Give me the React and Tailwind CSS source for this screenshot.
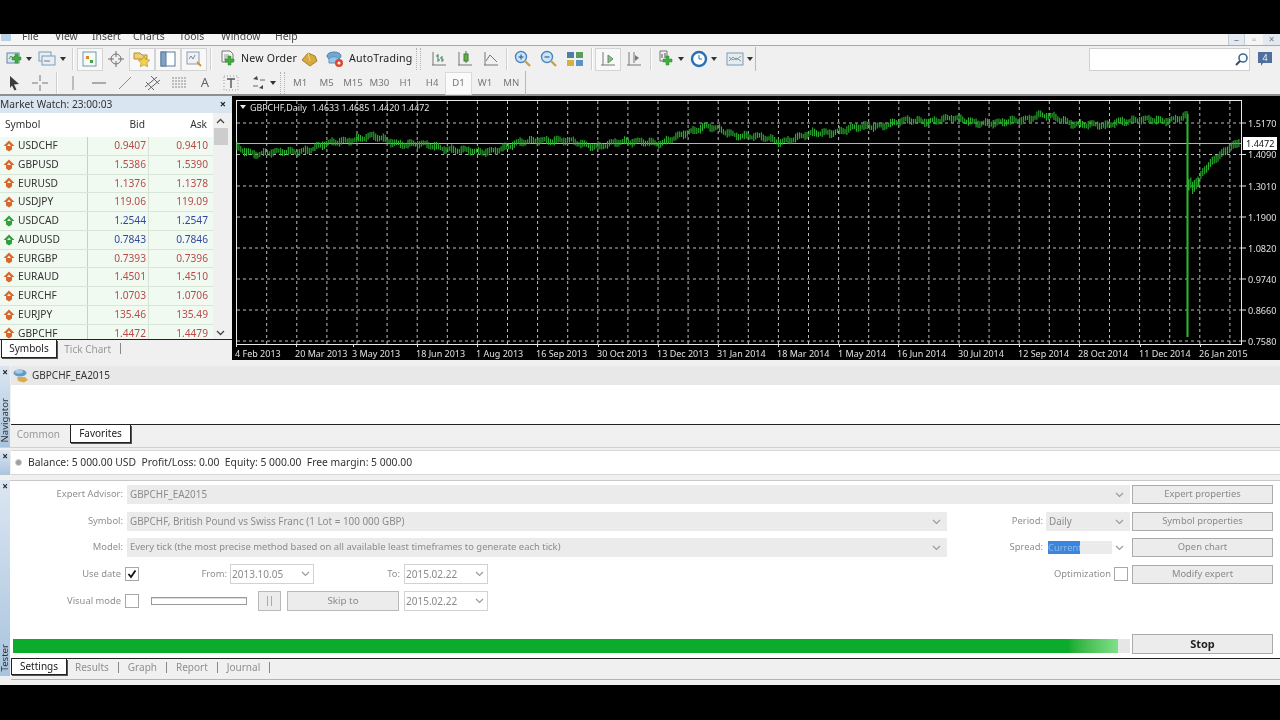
import React from "react";

/* ---------- chart data ---------- */
const KEY = [
  [236, 148], [255, 153], [280, 153], [310, 149], [345, 140], [372, 137], [400, 143], [440, 147], [478, 153],
  [510, 146], [540, 139], [570, 142], [600, 146], [640, 140], [662, 145], [685, 132], [706, 127], [735, 134],
  [780, 141], [820, 133], [860, 128], [900, 122], [950, 119], [1000, 124], [1040, 115], [1070, 122], [1105, 127],
  [1120, 120], [1160, 121], [1186, 116],
];
function baseY(x) {
  for (let i = 0; i < KEY.length - 1; i++) {
    const [a, b] = KEY[i];
    const [c, d] = KEY[i + 1];
    if (x >= a && x <= c) return b + ((d - b) * (x - a)) / (c - a);
  }
  return 116;
}
function bars() {
  let p = "";
  for (let x = 237; x < 1187; x += 1.9) {
    const y = baseY(x) + Math.sin(x * 0.47) * 1.4 + Math.sin(x * 0.13) * 1.3;
    const h = 2 + ((x * 7.3) % 2.4);
    p += `M${x.toFixed(1)} ${(y - h).toFixed(1)}V${(y + h).toFixed(1)}`;
  }
  p += "M1187 114V337M1188 114V337";
  for (let x = 1189; x < 1199; x += 1.8) {
    const t = (x * 5.7) % 6;
    p += `M${x.toFixed(1)} ${(176 + t).toFixed(1)}V${(186 + t * 1.4).toFixed(1)}`;
  }
  for (let x = 1199; x < 1239; x += 1.9) {
    const u = (x - 1199) / 40;
    const y = 182 - 40 * Math.pow(u, 0.62) + Math.sin(x * 0.6);
    p += `M${x.toFixed(1)} ${(y - 4).toFixed(1)}V${(y + 4).toFixed(1)}`;
  }
  return p;
}
const DATES = [
  [235, "4 Feb 2013"], [295, "20 Mar 2013"], [352, "3 May 2013"], [416, "18 Jun 2013"], [476, "1 Aug 2013"],
  [536, "16 Sep 2013"], [597, "30 Oct 2013"], [657, "13 Dec 2013"], [717, "31 Jan 2014"], [777, "18 Mar 2014"],
  [838, "1 May 2014"], [897, "16 Jun 2014"], [958, "30 Jul 2014"], [1018, "12 Sep 2014"], [1078, "28 Oct 2014"],
  [1139, "11 Dec 2014"], [1199, "26 Jan 2015"],
];
const PRICES = [
  [123, "1.5170"], [154.5, "1.4090"], [186, "1.3010"], [217, "1.1900"], [248, "1.0820"], [279, "0.9740"], [310, "0.8660"], [341, "0.7580"],
];
const VX = Array.from({ length: 33 }, (_, i) => 266.7 + i * 30.1);
const HY = [123, 154.5, 186, 217, 248, 279, 310, 341];

function Chart() {
  return (
    <div className="flex-1 h-full bg-black">
      <svg viewBox="232 96 1048 264" className="block w-[1048px] h-[264px]">
        <g stroke="#bdbdbd" strokeDasharray="3 3" strokeWidth="1">
          {VX.map((x) => <line key={x} x1={x} x2={x} y1="101" y2="344" />)}
          {HY.map((y) => <line key={y} x1="237" x2="1241" y1={y} y2={y} />)}
        </g>
        <rect x="236.5" y="100.5" width="1005" height="244" fill="none" stroke="#e8e8e8" />
        <line x1="237" x2="1241" y1="143.5" y2="143.5" stroke="#b4b4b4" />
        <path d={bars()} stroke="#2ab430" strokeWidth="1.1" fill="none" />
        <path d="M240 105h6l-3 4z" fill="#e8e8e8" />
        <text x="250" y="110.5" fill="#e4e4e4" fontSize="8.9" className="whitespace-pre">GBPCHF,Daily  1.4633 1.4685 1.4420 1.4472</text>
        {PRICES.map(([y, t]) => (
          <g key={t}>
            <line x1="1242" x2="1246" y1={y} y2={y} stroke="#e0e0e0" />
            <text x="1248" y={y + 3.5} fill="#e0e0e0" fontSize="9.1">{t}</text>
          </g>
        ))}
        <rect x="1243" y="137" width="34" height="13" fill="#fff" />
        <text x="1246" y="147" fill="#111" fontSize="9.1">1.4472</text>
        {DATES.map(([x, t]) => (
          <g key={t}>
            <line x1={x + 1.5} x2={x + 1.5} y1="344" y2="347" stroke="#e0e0e0" />
            <text x={x} y="356.5" fill="#e0e0e0" fontSize="9">{t}</text>
          </g>
        ))}
      </svg>
    </div>
  );
}

/* ---------- icons ---------- */
const S = ({ children }) => (
  <svg width="18" height="18" viewBox="0 0 18 18" fill="none" className="block">{children}</svg>
);
const Plus = ({ x = 9, y = 9 }) => (
  <path d={`M${x + 3} ${y}h3v3h3v3h-3v3h-3v-3h-3v-3h3z`} fill="#3fae3c" stroke="#2a8a2a" strokeWidth=".5" />
);
const INew = () => <S><rect x="1" y="3" width="12" height="10" fill="#d9e6f2" stroke="#5f86a8" /><path d="M3 9l2-3 2 2 3-3" stroke="#5a9a4a" /><Plus x={6} y={4} /></S>;
const IProf = () => <S><rect x="1" y="2" width="12" height="9" fill="#e7eef6" stroke="#7f9cb8" /><rect x="4" y="6" width="13" height="9" fill="#e7eef6" stroke="#7f9cb8" /><path d="M6 11h6" stroke="#7a7a7a" /></S>;
const IMw = () => <S><rect x="2" y="2" width="13" height="14" fill="#f7fbf7" stroke="#6e97b5" /><path d="M5 6h3v3H5z" fill="#d88b2a" /><path d="M9 10h3v3H9z" fill="#4aa04a" /></S>;
const ICross = () => <S><circle cx="9" cy="9" r="5" stroke="#707070" /><path d="M9 1v6M9 11v6M1 9h6M11 9h6" stroke="#707070" /></S>;
const IStars = () => <S><path d="M1 3h6l2 2h5v4H1z" fill="#efd07a" stroke="#b58f2c" /><path d="M11 6l1.8 3.6 4 .5-2.9 2.7.8 4-3.7-2-3.7 2 .8-4-2.9-2.7 4-.5z" fill="#f4d24e" stroke="#b58f2c" strokeWidth=".7" /></S>;
const IPanel = () => <S><rect x="2" y="2" width="14" height="14" fill="#fff" stroke="#5d7a98" /><rect x="2" y="2" width="5" height="14" fill="#7da3c8" stroke="#5d7a98" /></S>;
const IZoomChart = () => <S><rect x="2" y="2" width="12" height="12" fill="#eef2f6" stroke="#8a9db0" /><path d="M4 9l2-3 2 3 2-4" stroke="#7a8a9a" /><path d="M12 12l4 4" stroke="#c89a3a" strokeWidth="2" /></S>;
const IOrder = () => <S><path d="M3 1h8l3 3v8H3z" fill="#f6f6f6" stroke="#777" /><path d="M5 5h5M5 7h6M5 9h4" stroke="#999" /><Plus x={6} y={6} /></S>;
const IGold = () => <S><path d="M2 10l6-7 7 3 2 5-7 5z" fill="#d8aa3e" stroke="#a87f22" /><path d="M8 3l2 8" stroke="#f0d68a" /></S>;
const IAuto = () => <S><ellipse cx="8" cy="6" rx="7" ry="4" fill="#6ea6d4" stroke="#4d7fa8" /><path d="M3 9c1-3 8-3 10 0v4H3z" fill="#9cc4e2" stroke="#6892b4" /><circle cx="13" cy="13" r="4" fill="#d8492e" /><circle cx="13" cy="13" r="1.5" fill="#fff" /></S>;
const IBar = () => <S><path d="M2 15h14M3 2v13" stroke="#777" /><path d="M8 4v8M6 6h2M8 10h2M12 6v6M10 8h2M12 10h2" stroke="#3e7a5a" /></S>;
const ICandle = () => <S><path d="M2 15h14M3 2v13" stroke="#777" /><path d="M10 1v12" stroke="#3e7a3e" /><rect x="8" y="4" width="4" height="7" fill="#60b13e" stroke="#3e7a3e" /></S>;
const ILine = () => <S><path d="M2 15h14M3 2v13" stroke="#777" /><path d="M4 11l4-6 3 3 4 4" stroke="#6b7f6b" /></S>;
const IZoom = ({ plus }) => <S><circle cx="7" cy="7" r="5.5" fill="#cfe3f5" stroke="#4c86bd" strokeWidth="1.4" /><path d="M4.5 7h5" stroke="#2f70ad" strokeWidth="1.3" />{plus && <path d="M7 4.5v5" stroke="#2f70ad" strokeWidth="1.3" />}<path d="M11 11l5 5" stroke="#c9a24a" strokeWidth="2.4" /></S>;
const ITile = () => <S><rect x="1" y="2" width="7" height="6" fill="#4c7fa8" /><rect x="10" y="2" width="7" height="6" fill="#5e9a5a" /><rect x="1" y="10" width="7" height="6" fill="#d7b042" /><rect x="10" y="10" width="7" height="6" fill="#5b93c4" /></S>;
const IShift = () => <S><path d="M2 15h14M4 2v13" stroke="#777" /><path d="M9 5l5 4-5 4z" fill="#8fb88f" stroke="#5f8f5f" /></S>;
const IAuto2 = () => <S><path d="M2 15h14M4 2v13M9 2v11" stroke="#777" /><path d="M10 5l4 3-4 3z" fill="#777" /></S>;
const IInd = () => <S><path d="M3 1h7v10H3z" fill="#f0f0f0" stroke="#777" /><path d="M5 4v4M8 3v5" stroke="#555" /><Plus x={6} y={6} /></S>;
const IClock = () => <S><circle cx="9" cy="9" r="7" fill="#fff" stroke="#2a6fb4" strokeWidth="2.4" /><path d="M9 5v4h3" stroke="#2a6fb4" /></S>;
const ITpl = () => <S><rect x="1" y="3" width="16" height="12" fill="#e4ecf3" stroke="#7f99b0" /><path d="M3 11l4-4 3 3 5-4M3 7l4 3 3-2 5 3" stroke="#8c9a8c" /></S>;
const Arrow = () => <svg width="6" height="4" viewBox="0 0 6 4" className="block"><path d="M0 0h6L3 4z" fill="#333" /></svg>;
const ICursor = () => <S><path d="M5 2l9 8-5 .5 2.5 5-2 1-2.5-5L5 14z" fill="#3c3c3c" /></S>;
const IPlusThin = () => <S><path d="M9 1v6M9 11v6M1 9h6M11 9h6" stroke="#777" /></S>;
const IV = () => <S><path d="M9 2v14" stroke="#888" /></S>;
const IH = () => <S><path d="M2 9h14" stroke="#666" /></S>;
const IT = () => <S><path d="M3 15L15 3" stroke="#8d8d8d" /></S>;
const IChan = () => <S><path d="M1 13L13 3M4 16L16 6M2 8l8 8M7 2l8 8" stroke="#666" /></S>;
const IFib = () => <S><path d="M2 4h14M2 7h14M2 10h14M2 13h14" stroke="#8a8a8a" strokeDasharray="2 1" /></S>;
const ITextT = () => <S><rect x="2" y="2" width="14" height="14" stroke="#999" strokeDasharray="1 2" /><path d="M5 5h8M9 5v9" stroke="#555" strokeWidth="1.4" /></S>;
const IMarks = () => <S><path d="M3 5l4-3 1 4zM13 15l-4-1 4-3z" fill="#444" /><path d="M3 12h5M10 6h5" stroke="#666" /></S>;
const IUp = ({ c = "#d8672c" }) => (
  <svg width="12" height="12" viewBox="0 0 12 12" className="block">
    <path d="M6 0.5L11.5 6H9V9.5L6 11.5L3 9.5V6H0.5Z" fill={c} />
    <path d="M6 3.5L8 6H4Z" fill="#fbeedd" />
  </svg>
);
const Sel = () => (
  <svg width="9" height="6" viewBox="0 0 9 6" className="block"><path d="M1 1l3.5 3.5L8 1" stroke="#9a9a9a" strokeWidth="1.2" fill="none" /></svg>
);

/* ---------- toolbar pieces ---------- */
const Cell = ({ children, active }) => (
  <div className={`w-[26px] h-[23px] flex items-center justify-center shrink-0 ${active ? "bg-[#f8f8f8] border border-[#d4d4d4]" : ""}`}>{children}</div>
);
const Ar = () => <div className="w-[8px] flex justify-center shrink-0"><Arrow /></div>;
const Sep = () => <div className="w-[2px] h-[22px] shrink-0 bg-[#cfcfcf] border-r border-white" />;
const Grip = () => <div className="w-[5px] h-[22px] shrink-0 border-x border-dotted border-[#b4b4b4]" />;
const Tf = ({ t, active }) => (
  <div className={`w-[26.4px] h-[23px] flex items-center justify-center shrink-0 text-[9.6px] text-[#777] ${active ? "bg-[#fafafa] border border-[#dadada]" : ""}`}>{t}</div>
);

const Toolbar1 = () => (
  <div className="h-[26px] flex items-center pl-[4px] bg-[#f0f0f0]">
    <div className="w-[22px] flex justify-center"><INew /></div>
    <div className="w-[6px] flex justify-center"><Arrow /></div>
    <div className="w-[4px]" />
    <div className="w-[22px] flex justify-center"><IProf /></div>
    <div className="w-[10px] flex justify-center"><Arrow /></div>
    <div className="w-[4px]" />
    <Sep />
    <div className="w-[3px]" />
    <Cell active><IMw /></Cell>
    <Cell><ICross /></Cell>
    <Cell active><IStars /></Cell>
    <Cell active><IPanel /></Cell>
    <Cell active><IZoomChart /></Cell>
    <div className="w-[3px]" />
    <Sep />
    <div className="w-[3px]" />
    <Cell><IOrder /></Cell>
    <div className="text-[10.6px] text-[#222] w-[55px] shrink-0 whitespace-nowrap tracking-[0.2px]">New Order</div>
    <Cell><IGold /></Cell>
    <Cell><IAuto /></Cell>
    <div className="text-[10.6px] text-[#222] w-[68px] shrink-0 whitespace-nowrap pl-px tracking-[0.2px]">AutoTrading</div>
    <Grip />
    <div className="w-[5px]" />
    <Cell><IBar /></Cell>
    <Cell><ICandle /></Cell>
    <Cell><ILine /></Cell>
    <div className="w-[2px]" />
    <Sep />
    <div className="w-[2px]" />
    <Cell><IZoom plus /></Cell>
    <Cell><IZoom /></Cell>
    <Cell><ITile /></Cell>
    <div className="w-[3px]" />
    <Sep />
    <div className="w-[2px]" />
    <Cell active><IShift /></Cell>
    <Cell><IAuto2 /></Cell>
    <div className="w-[3px]" />
    <Sep />
    <div className="w-[3px]" />
    <div className="w-[22px] flex justify-center"><IInd /></div>
    <Ar />
    <div className="w-[3px]" />
    <div className="w-[22px] flex justify-center"><IClock /></div>
    <Ar />
    <div className="w-[6px]" />
    <div className="w-[22px] flex justify-center"><ITpl /></div>
    <Ar />
    <div className="h-[24px] w-px bg-[#b9b9b9] ml-[1px]" />
    <div className="flex-1" />
    <div className="w-[161px] h-[23px] bg-white border border-[#cfcfcf] flex items-center justify-end">
      <svg width="15" height="15" viewBox="0 0 15 15" fill="none"><circle cx="9" cy="6" r="4" stroke="#3f6a96" strokeWidth="1.6" /><path d="M6 9l-4 4" stroke="#2d4d72" strokeWidth="2" /></svg>
    </div>
    <div className="w-[30px] flex justify-center">
      <svg width="16" height="16" viewBox="0 0 16 16"><path d="M1 1h14v11H6l-2 3v-3H1z" fill="#4f6f9e" /><text x="8" y="10" fontSize="9" textAnchor="middle" fill="#f4f4f4">4</text></svg>
    </div>
  </div>
);

const Toolbar2 = () => (
  <div className="h-[24px] flex items-center pl-px bg-[#f0f0f0] border-b-2 border-[#8f8f8f]">
    <Cell><ICursor /></Cell>
    <Cell><IPlusThin /></Cell>
    <div className="w-[3px]" />
    <Sep />
    <div className="w-[2px]" />
    <Cell><IV /></Cell>
    <Cell><IH /></Cell>
    <Cell><IT /></Cell>
    <div className="w-[2px]" />
    <Cell><IChan /></Cell>
    <Cell><IFib /></Cell>
    <Cell><span className="text-[13px] text-[#666]">A</span></Cell>
    <Cell><ITextT /></Cell>
    <div className="w-[24px] flex items-center justify-end shrink-0"><IMarks /></div>
    <div className="w-[10px] flex justify-center shrink-0"><Arrow /></div>
    <div className="w-[2px]" />
    <Grip />
    <div className="w-[2px]" />
    <Tf t="M1" /><Tf t="M5" /><Tf t="M15" /><Tf t="M30" /><Tf t="H1" /><Tf t="H4" /><Tf t="D1" active /><Tf t="W1" /><Tf t="MN" />
    <div className="w-px h-[24px] bg-[#b9b9b9]" />
  </div>
);

/* ---------- market watch ---------- */
const ROWS = [
  ["USDCHF", "0.9407", "0.9410", "r"], ["GBPUSD", "1.5386", "1.5390", "r"], ["EURUSD", "1.1376", "1.1378", "r"],
  ["USDJPY", "119.06", "119.09", "r"], ["USDCAD", "1.2544", "1.2547", "b"], ["AUDUSD", "0.7843", "0.7846", "b"],
  ["EURGBP", "0.7393", "0.7396", "r"], ["EURAUD", "1.4501", "1.4510", "r"], ["EURCHF", "1.0703", "1.0706", "r"],
  ["EURJPY", "135.46", "135.49", "r"], ["GBPCHF", "1.4472", "1.4479", "r"],
];
function MarketWatch() {
  return (
    <div className="w-[232px] h-full flex flex-col shrink-0 bg-[#f0f0f0]">
      <div className="h-[17px] flex items-center bg-[#d9e5f1] shrink-0">
        <span className="flex-1 text-[10.2px] text-[#333]">Market Watch: 23:00:03</span>
        <span className="w-[18px] text-[11px] font-bold text-[#222] text-center">×</span>
      </div>
      <div className="flex flex-1 min-h-0">
        <div className="w-[213px] shrink-0 overflow-hidden bg-white">
          <div className="h-[24px] flex items-center text-[10.2px] text-[#333] bg-white">
            <span className="w-[88px] pl-[5px]">Symbol</span>
            <span className="w-[57px] text-right">Bid</span>
            <span className="w-[62px] text-right">Ask</span>
          </div>
          {ROWS.map(([s, b, a, c]) => (
            <div key={s} className="h-[18.75px] flex items-center text-[10.2px] bg-[#f1faf1] border-b border-[#d8e6d8]">
              <div className="w-[88px] h-full flex items-center pl-[3px] gap-[3px] border-r border-[#c4d0c4] text-[#333]">
                <IUp c={c === "r" ? "#d8672c" : "#2f9f3f"} />
                <span>{s}</span>
              </div>
              <span className={`w-[61px] h-full flex items-center justify-end pr-[2px] border-r border-[#d6e2d6] ${c === "r" ? "text-[#b84a4a]" : "text-[#3248a0]"}`}>{b}</span>
              <span className={`w-[60px] h-full flex items-center justify-end pr-[1px] ${c === "r" ? "text-[#b84a4a]" : "text-[#3248a0]"}`}>{a}</span>
            </div>
          ))}
        </div>
        <div className="w-[15px] flex flex-col items-center bg-[#f0f0f0] pt-[5px] h-full">
          <svg width="9" height="6" viewBox="0 0 9 6" fill="none"><path d="M1 5l3.5-3.5L8 5" stroke="#444" strokeWidth="1.3" /></svg>
          <div className="w-[14px] h-[17px] bg-[#cdcdcd] mt-[4px]" />
          <div className="flex-1" />
          <svg width="9" height="6" viewBox="0 0 9 6" fill="none" className="mb-[3px]"><path d="M1 1l3.5 3.5L8 1" stroke="#444" strokeWidth="1.3" /></svg>
        </div>
      </div>
      <div className="h-[21px] shrink-0 flex border-t border-[#222] pl-[1px] text-[10px] bg-[#f0f0f0]">
        <div className="w-[56px] h-[18px] bg-white border-x border-b border-[#222] text-[#222] flex items-center justify-center shadow-[1px_1px_0_#555]">Symbols</div>
        <div className="w-[54px] h-[18px] text-[#999] flex items-center justify-end">Tick Chart</div>
        <div className="ml-[9px] mt-[3px] w-px h-[11px] bg-[#888]" />
      </div>
    </div>
  );
}

/* ---------- bottom panels ---------- */
const Side = ({ label, h }) => (
  <div className={`w-[10px] ${h} shrink-0 flex flex-col items-center bg-gradient-to-b from-[#dbe6f2] to-[#a9c4de]`}>
    <span className="text-[10px] leading-[12px] font-bold text-[#222]">×</span>
    <div className="flex-1" />
    {label && <span className="[writing-mode:vertical-rl] rotate-180 text-[9.6px] leading-[10px] text-[#333] mb-[4px]">{label}</span>}
  </div>
);
const Field = ({ w, children, small }) => (
  <div className={`${w} h-[19px] shrink-0 bg-[#ebebeb] flex items-center ${small ? "text-[9.45px]" : "text-[9.9px]"} text-[#8b8b8b] pl-[3px] pr-[6px]`}>
    <span className="flex-1 truncate">{children}</span>
    <Sel />
  </div>
);
const DateF = ({ children }) => (
  <div className="w-[84px] h-[20px] shrink-0 bg-white border border-[#d2d2d2] flex items-center text-[10px] text-[#8b8b8b] pl-px pr-[3px]">
    <span className="flex-1">{children}</span><Sel />
  </div>
);
const Btn = ({ children, bold }) => (
  <div className={`w-[141px] shrink-0 bg-[#ececec] border border-[#ababab] flex items-center justify-center ${bold ? "h-[20px] font-bold text-[#222] text-[11px]" : "h-[19px] text-[9.4px] text-[#8a8a8a]"}`}>{children}</div>
);
const Lab = ({ w, children }) => (
  <div className={`${w} shrink-0 text-right text-[9.4px] text-[#8f8f8f]`}>{children}</div>
);
const Chk = ({ on }) => (
  <div className="w-[14px] h-[14px] shrink-0 bg-white border border-[#a8a8a8] flex items-center justify-center">
    {on && <svg width="10" height="10" viewBox="0 0 10 10" fill="none"><path d="M1.5 5l2.5 3 4.5-6.5" stroke="#111" strokeWidth="1.8" /></svg>}
  </div>
);

function Tester() {
  return (
    <div className="flex flex-1 min-h-0 mt-[5px]">
      <Side h="h-[196px]" label="Tester" />
      <div className="flex-1 flex flex-col min-w-0">
        <div className="h-[178px] bg-white border-t border-[#c8c8c8] pl-px flex flex-col shrink-0 pt-[4px]">
          <div className="flex items-center h-[19px]">
            <Lab w="w-[112px]">Expert Advisor:</Lab>
            <div className="w-[4px]" />
            <Field w="w-[1003px]">GBPCHF_EA2015</Field>
            <div className="w-[2px]" />
            <Btn>Expert properties</Btn>
          </div>
          <div className="flex items-center h-[19px] mt-[8px]">
            <Lab w="w-[112px]">Symbol:</Lab>
            <div className="w-[4px]" />
            <Field w="w-[820px]">GBPCHF, British Pound vs Swiss Franc (1 Lot = 100 000 GBP)</Field>
            <Lab w="w-[96px]">Period:</Lab>
            <div className="w-[3px]" />
            <Field w="w-[84px]">Daily</Field>
            <div className="w-[2px]" />
            <Btn>Symbol properties</Btn>
          </div>
          <div className="flex items-center h-[19px] mt-[7px]">
            <Lab w="w-[112px]">Model:</Lab>
            <div className="w-[4px]" />
            <Field w="w-[820px]" small>Every tick (the most precise method based on all available least timeframes to generate each tick)</Field>
            <Lab w="w-[96px]">Spread:</Lab>
            <div className="w-[3px]" />
            <div className="w-[84px] h-[19px] shrink-0 flex items-center bg-white pl-[2px] pr-[6px]">
              <div className="w-[32px] h-[13px] bg-[#3a86dc] text-[9.4px] leading-[13px] text-[#8fb8e6] overflow-hidden">Current</div>
              <div className="w-[32px] h-[13px] bg-[#ebebeb]" />
              <div className="flex-1" />
              <Sel />
            </div>
            <div className="w-[2px]" />
            <Btn>Open chart</Btn>
          </div>
          <div className="flex items-center h-[20px] mt-[7px]">
            <Lab w="w-[110px]">Use date</Lab>
            <div className="w-[4px]" />
            <Chk on />
            <Lab w="w-[88px]">From:</Lab>
            <div className="w-[3px]" />
            <DateF>2013.10.05</DateF>
            <Lab w="w-[86px]">To:</Lab>
            <div className="w-[4px]" />
            <DateF>2015.02.22</DateF>
            <Lab w="w-[623px]">Optimization</Lab>
            <div className="w-[3px]" />
            <Chk />
            <div className="w-[4px]" />
            <Btn>Modify expert</Btn>
          </div>
          <div className="flex items-center h-[20px] mt-[7px]">
            <Lab w="w-[110px]">Visual mode</Lab>
            <div className="w-[4px]" />
            <Chk />
            <div className="w-[12px]" />
            <div className="w-[96px] h-[8px] shrink-0 bg-white border border-[#9a9a9a] shadow-[inset_0_1px_0_#ddd]" />
            <div className="w-[11px]" />
            <div className="w-[23px] h-[20px] shrink-0 bg-[#ececec] border border-[#b9b9b9] flex items-center justify-center gap-[3px]">
              <div className="w-px h-[10px] bg-[#aaa]" /><div className="w-px h-[10px] bg-[#aaa]" />
            </div>
            <div className="w-[6px]" />
            <div className="w-[112px] h-[20px] shrink-0 bg-[#ececec] border border-[#b9b9b9] flex items-center justify-center text-[9.8px] text-[#8a8a8a]">Skip to</div>
            <div className="w-[5px]" />
            <DateF>2015.02.22</DateF>
          </div>
          <div className="flex-1" />
          <div className="flex items-center h-[20px] mb-[4px]">
            <div className="w-[2px]" />
            <div className="w-[1117px] h-[14px] mt-[4px] shrink-0 flex bg-[#e6e6e6]">
              <div className="w-[1105px] h-full bg-gradient-to-r from-[#0bab2c] from-[95.5%] to-[#7fe08a]" />
            </div>
            <div className="w-[2px]" />
            <Btn bold>Stop</Btn>
          </div>
        </div>
        <div className="h-[22px] flex shrink-0 border-t border-b border-t-[#222] border-b-[#b4b4b4] text-[10px] ml-px">
          <div className="w-[56px] h-[16px] bg-white border-x border-b border-[#222] text-[#222] flex items-center justify-center shadow-[1px_1px_0_#555]">Settings</div>
          <div className="w-[8px]" />
          {["Results", "Graph", "Report", "Journal"].map((t) => (
            <div key={t} className="flex items-center h-[16px] text-[#8f8f8f]">
              <span className="pr-[9px]">{t}</span>
              <div className="w-px h-[11px] bg-[#888] mr-[9px]" />
            </div>
          ))}
        </div>
      </div>
    </div>
  );
}

export default function App() {
  return (
    <div className="w-[1280px] h-[720px] bg-black overflow-hidden flex flex-col font-['Noto_Sans',sans-serif] blur-[0.3px]">
      <div className="h-[34px] shrink-0" />
      <div className="h-[651px] shrink-0 bg-[#f0f0f0] flex flex-col">
        <div className="h-[12px] shrink-0 flex items-start overflow-hidden border-b border-[#a9a9a9] text-[10.4px] leading-[4px] text-[#444] bg-[#f5f5f5]">
          <div className="w-[22px] shrink-0 h-[8px]"><div className="w-[10px] h-[7px] bg-[#b9d0e6] ml-px" /></div>
          <span className="w-[33px]">File</span>
          <span className="w-[37px]">View</span>
          <span className="w-[41px]">Insert</span>
          <span className="w-[46px]">Charts</span>
          <span className="w-[42px]">Tools</span>
          <span className="w-[54px]">Window</span>
          <span className="w-[40px]">Help</span>
          <div className="flex-1" />
          <div className="w-[52px] h-[11px] flex text-[#778] text-[10px] leading-[10px]">
            <span className="w-[17px] text-center bg-[#e3e9f0] border-x border-[#c5ccd5]">–</span>
            <span className="w-[18px] text-center">▫</span>
            <span className="w-[17px] text-center bg-[#e3e9f0]">×</span>
          </div>
        </div>
        <Toolbar1 />
        <Toolbar2 />
        <div className="h-[264px] shrink-0 flex">
          <MarketWatch />
          <Chart />
        </div>
        <div className="h-[6px] shrink-0" />
        {/* navigator */}
        <div className="flex h-[81px] shrink-0">
          <Side h="h-[81px]" label="Navigator" />
          <div className="flex-1 flex flex-col min-w-0 pl-px">
            <div className="h-[19px] bg-[#e8e8e8] flex items-center pl-[2px] gap-[3px] text-[10px] text-[#333] shrink-0">
              <svg width="16" height="15" viewBox="0 0 16 15"><ellipse cx="7" cy="5" rx="6.5" ry="3.5" fill="#5e9ccb" /><ellipse cx="6" cy="3.5" rx="4" ry="2" fill="#a6cbe6" /><path d="M4 9h8l3 3-4 2.5-6-1.5z" fill="#d9ad48" /></svg>
              <span>GBPCHF_EA2015</span>
            </div>
            <div className="h-[40px] bg-white border-b border-[#222] shrink-0" />
            <div className="flex text-[10px] flex-1">
              <div className="w-[49px] h-[18px] text-[#999] flex items-center justify-end">Common</div>
              <div className="w-[10px]" />
              <div className="w-[61px] h-[18px] bg-white border-x border-b border-[#222] text-[#222] flex items-center justify-center shadow-[1px_1px_0_#555]">Favorites</div>
            </div>
          </div>
        </div>
        <div className="h-[3px] shrink-0 border-t border-[#d0d0d0]" />
        {/* balance */}
        <div className="flex h-[25px] shrink-0">
          <Side h="h-[25px]" />
          <div className="flex-1 bg-white border-y border-[#d6d6d6] flex items-center pl-[4px] gap-[6px] text-[10.35px] text-[#333] ml-px">
            <div className="w-[7px] h-[7px] rounded-full bg-[#9aa0a0] border border-[#d0d0d0]" />
            <span className="whitespace-pre">Balance: 5 000.00 USD  Profit/Loss: 0.00  Equity: 5 000.00  Free margin: 5 000.00</span>
          </div>
        </div>
        <Tester />
      </div>
      <div className="flex-1" />
    </div>
  );
}
